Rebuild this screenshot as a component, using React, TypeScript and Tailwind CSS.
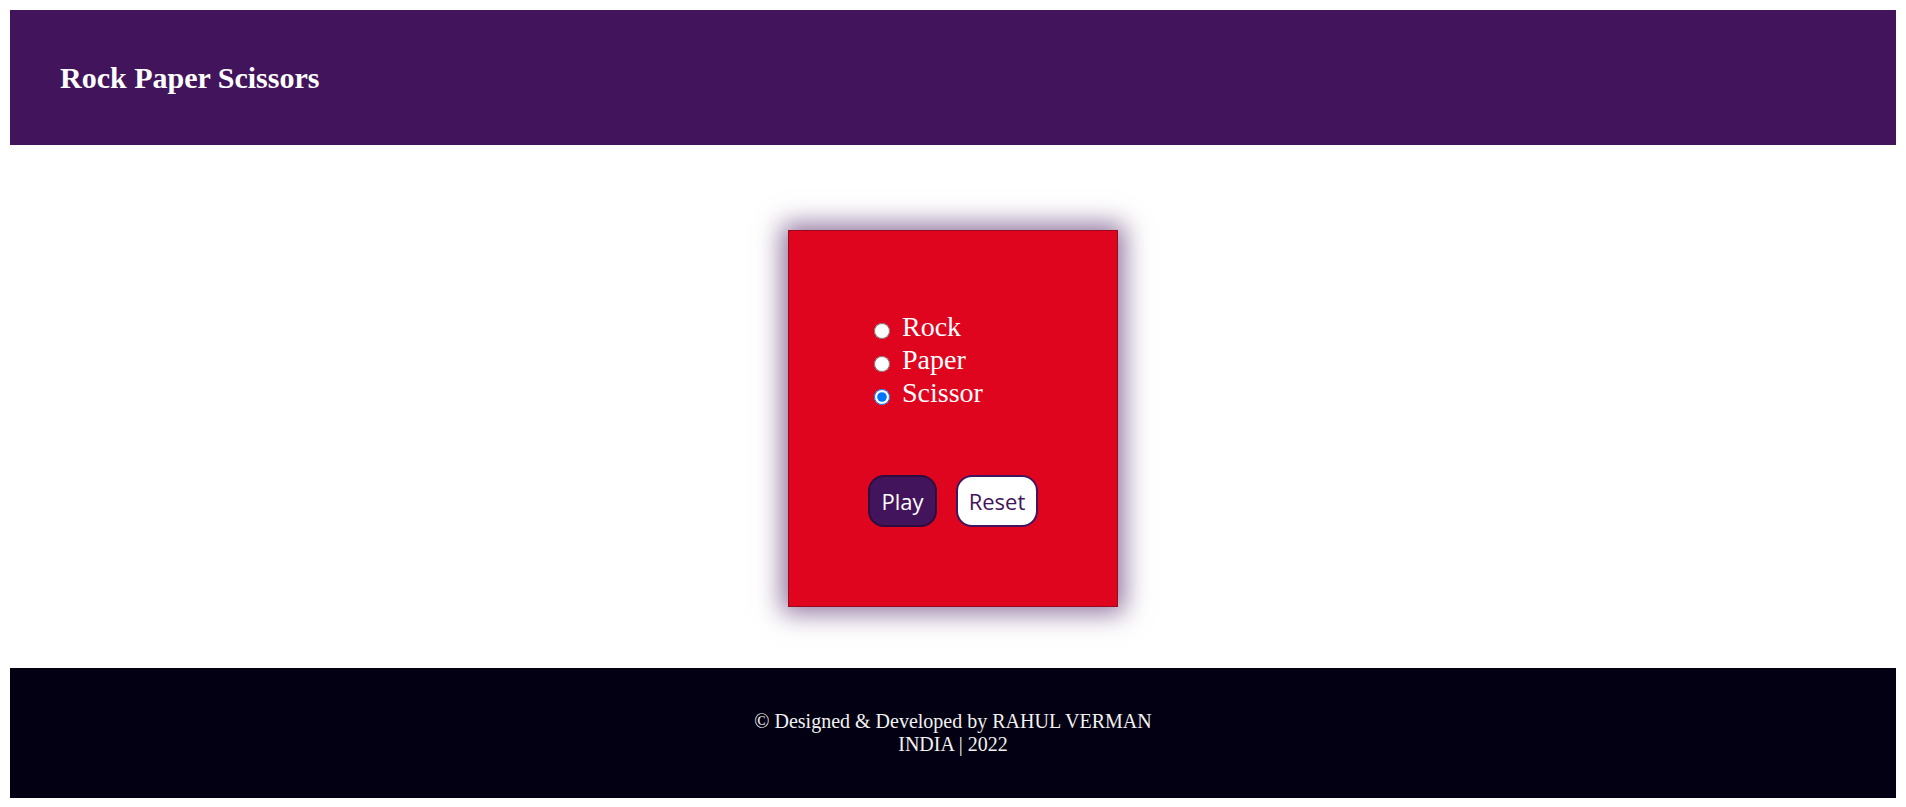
export default function App() {
  return (
    <div className="p-[10px] pb-[9px] bg-white min-h-screen">
      <header className="h-[135px] bg-[#42145c] flex items-center pl-[50px]">
        <h1 className="text-white text-[30px] font-bold font-['Liberation_Serif',serif]">
          Rock Paper Scissors
        </h1>
      </header>

      <main className="flex justify-center pt-[85px] pb-[61px]">
        <div className="w-[330px] h-[377px] bg-[#e0051f] border border-[#9a0a1e] shadow-[0_0_24px_6px_rgba(66,20,92,0.6)] pl-[79px] pt-[79px]">
          <div className="flex flex-col">
            {["Rock", "Paper", "Scissor"].map((opt) => (
              <label
                key={opt}
                className="flex items-center h-[33px] text-white text-[28px] leading-[33px] font-['Liberation_Serif',serif]"
              >
                <input
                  type="radio"
                  name="choice"
                  defaultChecked={opt === "Scissor"}
                  className="w-4 h-4 ml-[6px] mr-[12px] mt-[8px]"
                />
                {opt}
              </label>
            ))}
          </div>

          <div className="flex gap-[19px] mt-[66px] font-['Open_Sans',sans-serif] text-[22px]">
            <button className="w-[69px] h-[52px] rounded-[16px] bg-[#42145c] border-2 border-[#2d0c40] text-white">
              Play
            </button>
            <button className="w-[82px] h-[52px] rounded-[16px] bg-white border-2 border-[#42145c] text-[#42145c]">
              Reset
            </button>
          </div>
        </div>
      </main>

      <footer className="h-[130px] bg-[#020012] flex flex-col items-center justify-center text-[#f2f2f2] text-[20px] leading-[23px] font-['Liberation_Serif',serif]">
        <p>© Designed &amp; Developed by RAHUL VERMAN</p>
        <p>INDIA | 2022</p>
      </footer>
    </div>
  );
}
